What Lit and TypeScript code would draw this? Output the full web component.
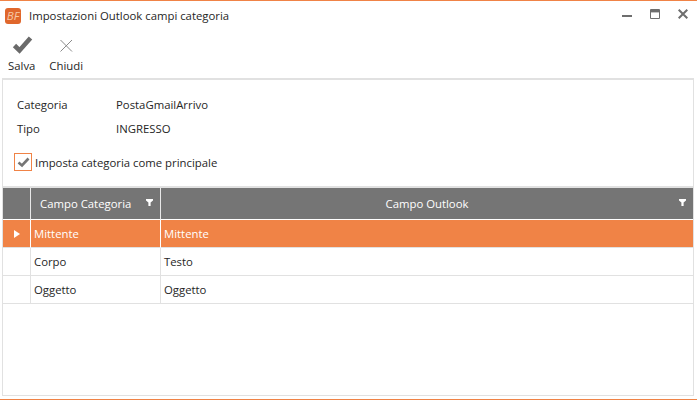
import { LitElement, html, css } from "lit";
import { customElement } from "lit/decorators.js";

const rows = [
  ["Mittente", "Mittente", true],
  ["Corpo", "Testo", false],
  ["Oggetto", "Oggetto", false],
] as const;

const filter = html`<svg class="filter" width="7" height="7" viewBox="0 0 7 7"><path d="M0 0H7V1.5L4.6 3.6V7H2.4V3.6L0 1.5Z" fill="#fff"/></svg>`;

@customElement("app-root")
export class AppRoot extends LitElement {
  static styles = css`
    :host { display: block; }
    .win {
      width: 697px; height: 403px; box-sizing: border-box; background: #fff;
      display: flex; flex-direction: column; overflow: hidden;
      font-family: "Open Sans", "Noto Sans", sans-serif; font-size: 11.35px; color: #262626;
    }
    .accent { height: 1px; background: #f08346; flex: none; }
    .title { height: 29px; flex: none; display: flex; align-items: center; padding: 0 0 0 5px; }
    .logo {
      width: 16px; height: 16px; border-radius: 3px; background: #e0672c; color: #f6c9a8;
      font-size: 11.5px; font-style: italic; line-height: 16px; text-align: center; flex: none;
    }
    .title-text { margin-left: 8px; flex: 1; }
    .ctrls { display: flex; align-items: flex-start; gap: 18px; padding-right: 9px; height: 10px; margin-top: -3px; }
    .ctrls svg { display: block; }
    .toolbar { height: 48px; flex: none; display: flex; padding-left: 8px; gap: 14px; box-sizing: border-box; }
    .tool { display: flex; flex-direction: column; align-items: center; }
    .tool svg { height: 24px; display: block; margin-top: 3px; }
    .tool span { line-height: 16px; margin-top: 1px; }
    .panel {
      flex: none; height: 318px; margin: 0 3px 0 2px; box-sizing: border-box;
      border: 1px solid #e1e1e1; border-top-width: 2px;
      display: flex; flex-direction: column;
    }
    .form { height: 106px; flex: none; box-sizing: border-box; padding: 14px 0 0 14px; }
    .field { display: grid; grid-template-columns: 99px 1fr; height: 24px; line-height: 21px; }
    .check-row { display: flex; align-items: center; margin-top: 10px; margin-left: -3px; gap: 3px; height: 20px; }
    .box { width: 16px; height: 16px; border: 1px solid #f08346; display: flex; align-items: center; justify-content: center; }
    .grid { display: grid; grid-template-columns: 27px 130px 1fr; border-top: 2px solid #e1e1e1; }
    .head {
      height: 32px; background: #757575; color: #fff; display: flex; align-items: center;
      justify-content: center; position: relative; box-sizing: border-box;
      border-left: 1px solid #e8e8e8; border-bottom: 1px solid #fff;
    }
    .head:first-child { border-left: 0; }
    .head.cat { justify-content: flex-start; padding-left: 9px; }
    .filter { position: absolute; right: 7px; top: 11px; }
    .cell {
      height: 28px; box-sizing: border-box; border-left: 1px solid #e1e1e1; border-bottom: 1px solid #e1e1e1;
      display: flex; align-items: center; padding-left: 3px; color: #262626;
    }
    .cell.ind { border-left: 0; padding: 0; justify-content: center; }
    .cell.sel { background: #f08346; color: #fff; border-left-color: #fff; border-bottom-color: #e1e1e1; }
    .rule { height: 1px; background: #f08346; margin-top: 3px; flex: none; }
  `;

  render() {
    return html`<div class="win">
      <div class="accent"></div>
      <div class="title">
        <div class="logo">BF</div>
        <div class="title-text">Impostazioni Outlook campi categoria</div>
        <div class="ctrls">
          <svg width="10" height="10" viewBox="0 0 10 10"><rect x="0" y="6" width="10" height="2" fill="#6e6e6e"/></svg>
          <svg width="10" height="10" viewBox="0 0 10 10"><path d="M.5.5h9v9h-9Z" fill="none" stroke="#6e6e6e"/><rect x="1" y="1" width="8" height="2.4" fill="#6e6e6e"/></svg>
          <svg width="10" height="10" viewBox="0 0 10 10"><path d="M.7.7L9.3 9.3M9.3.7L.7 9.3" stroke="#6e6e6e" stroke-width="2"/></svg>
        </div>
      </div>
      <div class="toolbar">
        <div class="tool">
          <svg width="22" height="24" viewBox="0 0 22 24"><path d="M3.5 12.5L8.5 17.5L19.5 5" fill="none" stroke="#6a6a6a" stroke-width="4.6"/></svg>
          <span>Salva</span>
        </div>
        <div class="tool">
          <svg width="14" height="24" viewBox="0 0 14 24"><path d="M1.5 7L13 18.5M13 7L1.5 18.5" fill="none" stroke="#8a8a8a" stroke-width="1"/></svg>
          <span>Chiudi</span>
        </div>
      </div>
      <div class="panel">
        <div class="form">
          <div class="field"><span>Categoria</span><span>PostaGmailArrivo</span></div>
          <div class="field"><span>Tipo</span><span>INGRESSO</span></div>
          <div class="check-row">
            <div class="box"><svg width="13" height="12" viewBox="0 0 13 12"><path d="M1.5 6.5L5 9.5L11.5 2.5" fill="none" stroke="#767676" stroke-width="2.6"/></svg></div>
            <span>Imposta categoria come principale</span>
          </div>
        </div>
        <div class="grid">
          <div class="head"></div>
          <div class="head cat">Campo Categoria ${filter}</div>
          <div class="head">Campo Outlook ${filter}</div>
          ${rows.map(([a, b, sel]) => {
            const s = sel ? "sel" : "";
            return html`
              <div class="cell ind ${s}">
                ${sel ? html`<svg width="6" height="8" viewBox="0 0 6 8"><path d="M0 0L6 4L0 8Z" fill="#fff"/></svg>` : ""}
              </div>
              <div class="cell ${s}">${a}</div>
              <div class="cell ${s}">${b}</div>`;
          })}
        </div>
      </div>
      <div class="rule"></div>
    </div>`;
  }
}
